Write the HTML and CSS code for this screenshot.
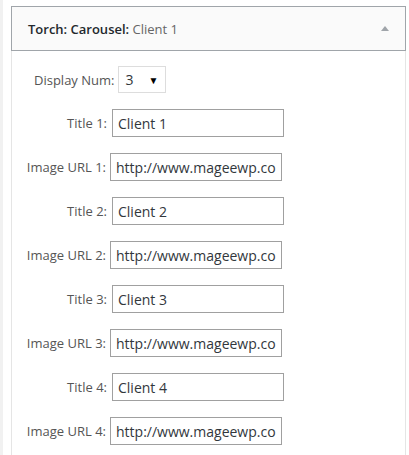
FILE: index.html
```html
<!DOCTYPE html>
<html lang="en">
<head>
  <meta charset="UTF-8" />
  <title>Torch: Carousel</title>
  <link rel="stylesheet" href="styles.css">
</head>
<body>

  <div class="widget">
    <div class="widget-top">
      <h3>Torch: Carousel:<span class="in-title"> Client 1</span></h3>
      <span class="toggle"></span>
    </div>

    <div class="widget-inside">
      <div class="row-num">
        <label>Display Num:</label>
        <span class="select">3<span class="caret">▼</span></span>
      </div>

      <div class="row row-title"><label>Title 1:</label><input value="Client 1" /></div>
      <div class="row row-url"><label>Image URL 1:</label><input value="http://www.mageewp.com/wp-content/uploads/client1.png" /></div>
      <div class="row row-title"><label>Title 2:</label><input value="Client 2" /></div>
      <div class="row row-url"><label>Image URL 2:</label><input value="http://www.mageewp.com/wp-content/uploads/client2.png" /></div>
      <div class="row row-title"><label>Title 3:</label><input value="Client 3" /></div>
      <div class="row row-url"><label>Image URL 3:</label><input value="http://www.mageewp.com/wp-content/uploads/client3.png" /></div>
      <div class="row row-title"><label>Title 4:</label><input value="Client 4" /></div>
      <div class="row row-url"><label>Image URL 4:</label><input value="http://www.mageewp.com/wp-content/uploads/client4.png" /></div>
    </div>
  </div>

</body>
</html>
```

FILE: styles.css
```css
body {
  margin: 0;
  background: #fff;
  border-left: 3px solid #f1f1f1;
  padding: 6px 3px 0 8px;
  font-family: "Open Sans", "Noto Sans", sans-serif;
  color: #444;
}

.widget {
  border-left: 1px solid #e5e5e5;
  border-right: 1px solid #e5e5e5;
}

.widget-top {
  display: flex;
  align-items: center;
  justify-content: space-between;
  height: 43px;
  margin: 0 -1px;
  background: #fafafa;
  border: 1px solid #a0a5aa;
}

.widget-top h3 {
  margin: 0 0 0 16px;
  font-size: 13px;
  font-weight: 600;
  color: #23282d;
}

.in-title {
  font-weight: 400;
  color: #666;
}

.toggle {
  width: 0;
  height: 0;
  margin-right: 16px;
  border-left: 4px solid transparent;
  border-right: 4px solid transparent;
  border-bottom: 5px solid #a0a5aa;
}

.widget-inside {
  padding: 15px 0 10px 0;
  font-size: 13px;
  color: #555;
}

.row-num {
  display: flex;
  align-items: center;
  gap: 4px;
  padding-left: 22px;
}

.select {
  display: flex;
  align-items: center;
  justify-content: space-between;
  box-sizing: border-box;
  width: 48px;
  height: 27px;
  padding: 0 7px 0 6px;
  border: 1px solid #ddd;
  font-size: 14px;
  color: #32373c;
}

.caret {
  font-size: 10px;
  color: #000;
}

.row {
  display: flex;
  align-items: center;
  margin-top: 16px;
}

.row label {
  flex: none;
  text-align: right;
  white-space: nowrap;
}

.row-title label {
  width: 95px;
  margin-right: 5px;
}

.row-url label {
  width: 94px;
  margin-right: 4px;
}

input {
  box-sizing: border-box;
  width: 172px;
  height: 28px;
  padding: 0 5px;
  border: 1px solid #a0a0a0;
  font-family: "Open Sans", "Noto Sans", sans-serif;
  font-size: 14px;
  color: #32373c;
  background: #fff;
}
```
